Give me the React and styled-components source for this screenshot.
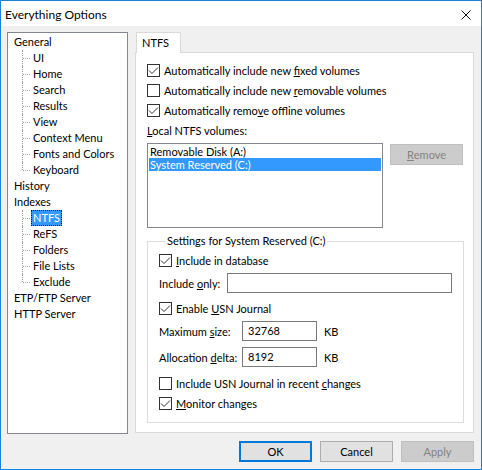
import React from 'react'
import styled, { createGlobalStyle } from 'styled-components'

const Global = createGlobalStyle`
  html, body { margin: 0; padding: 0; background: #ffffff; }
  * { box-sizing: border-box; }
`

const FONT = `"Segoe UI", Lato, "Liberation Sans", sans-serif`

const treeItems = [
  { label: 'General', level: 0 },
  { label: 'UI', level: 1 },
  { label: 'Home', level: 1 },
  { label: 'Search', level: 1 },
  { label: 'Results', level: 1 },
  { label: 'View', level: 1 },
  { label: 'Context Menu', level: 1 },
  { label: 'Fonts and Colors', level: 1 },
  { label: 'Keyboard', level: 1, last: true },
  { label: 'History', level: 0 },
  { label: 'Indexes', level: 0 },
  { label: 'NTFS', level: 1, selected: true },
  { label: 'ReFS', level: 1 },
  { label: 'Folders', level: 1 },
  { label: 'File Lists', level: 1 },
  { label: 'Exclude', level: 1, last: true },
  { label: 'ETP/FTP Server', level: 0 },
  { label: 'HTTP Server', level: 0 },
]

const Check = ({ checked }) => (
  <Box>
    {checked && (
      <svg width="11" height="11" viewBox="0 0 11 11">
        <polyline points="1,5.5 4,8.5 10,2.5" fill="none" stroke="#333" strokeWidth="1" />
      </svg>
    )}
  </Box>
)

export default function App() {
  return (
    <>
      <Global />
      <Window>
        <TitleBar>
          <Title>Everything Options</Title>
          <CloseIcon width="10" height="10" viewBox="0 0 10 10">
            <path d="M0.5 0.5 L9.5 9.5 M9.5 0.5 L0.5 9.5" stroke="#111" strokeWidth="1" />
          </CloseIcon>
        </TitleBar>
        <Body>
          <Main>
            <Tree>
              {treeItems.map((t) => (
                <TreeRow key={t.label} $level={t.level} $last={t.last}>
                  <TreeLabel $selected={t.selected}>{t.label}</TreeLabel>
                </TreeRow>
              ))}
            </Tree>
            <TabArea>
              <TabStrip>
                <Tab>NTFS</Tab>
              </TabStrip>
              <Panel>
                <CheckRow>
                  <Check checked />
                  <span>Automatically include new <u>f</u>ixed volumes</span>
                </CheckRow>
                <CheckRow>
                  <Check />
                  <span>Automatically include new <u>r</u>emovable volumes</span>
                </CheckRow>
                <CheckRow>
                  <Check checked />
                  <span>Automatically remo<u>v</u>e offline volumes</span>
                </CheckRow>
                <Label $mt={3}><u>L</u>ocal NTFS volumes:</Label>
                <VolumeRow>
                  <ListBox>
                    <ListItem>Removable Disk (A:)</ListItem>
                    <ListItem $selected>System Reserved (C:)</ListItem>
                  </ListBox>
                  <Button $disabled $side><u>R</u>emove</Button>
                </VolumeRow>
                <Group>
                  <Legend>Settings for System Reserved (C:)</Legend>
                  <CheckRow $mt={1}>
                    <Check checked />
                    <span><u>I</u>nclude in database</span>
                  </CheckRow>
                  <FieldRow $mt={3}>
                    <FieldLabel $w={68}>Include <u>o</u>nly:</FieldLabel>
                    <Input $w={225} />
                  </FieldRow>
                  <CheckRow $mt={5}>
                    <Check checked />
                    <span>Enable <u>U</u>SN Journal</span>
                  </CheckRow>
                  <FieldRow $mt={3}>
                    <FieldLabel $w={83}>Maximum <u>s</u>ize:</FieldLabel>
                    <Input $w={75}>32768</Input>
                    <Unit>KB</Unit>
                  </FieldRow>
                  <FieldRow $mt={6}>
                    <FieldLabel $w={83}>Allocation <u>d</u>elta:</FieldLabel>
                    <Input $w={75}>8192</Input>
                    <Unit>KB</Unit>
                  </FieldRow>
                  <CheckRow $mt={6}>
                    <Check />
                    <span>Include USN Journal in recent <u>c</u>hanges</span>
                  </CheckRow>
                  <CheckRow>
                    <Check checked />
                    <span><u>M</u>onitor changes</span>
                  </CheckRow>
                </Group>
              </Panel>
            </TabArea>
          </Main>
          <Footer>
            <Button $default>OK</Button>
            <Button>Cancel</Button>
            <Button $disabled>Apply</Button>
          </Footer>
        </Body>
      </Window>
    </>
  )
}

const Window = styled.div`
  width: 482px;
  height: 470px;
  border: 1px solid #1883d7;
  display: flex;
  flex-direction: column;
  font-family: ${FONT};
  font-size: 11px;
  color: #000;
  overflow: hidden;
`

const TitleBar = styled.div`
  height: 25px;
  background: #ffffff;
  display: flex;
  align-items: center;
  justify-content: space-between;
  padding: 0 10px 0 4px;
`

const Title = styled.div`
  font-size: 12px;
  margin-top: 1px;
`

const CloseIcon = styled.svg`
  display: block;
  margin-top: 2px;
`

const Body = styled.div`
  flex: 1;
  background: #f0f0f0;
  padding: 6px 7px 7px 6px;
  display: flex;
  flex-direction: column;
`

const Main = styled.div`
  display: flex;
  align-items: flex-start;
  gap: 7px;
`

const Tree = styled.div`
  width: 122px;
  height: 402px;
  background: #ffffff;
  border: 1px solid #828790;
  padding-top: 1px;
`

const TreeRow = styled.div`
  position: relative;
  height: 16px;
  display: flex;
  align-items: center;
  padding-left: ${(p) => (p.$level ? 23 : 4)}px;

  ${(p) =>
    p.$level
      ? `
    &::before {
      content: '';
      position: absolute;
      left: 14px;
      top: 0;
      height: ${p.$last ? 8 : 16}px;
      border-left: 1px dotted #a0a0a0;
    }
    &::after {
      content: '';
      position: absolute;
      left: 15px;
      top: 8px;
      width: 7px;
      border-top: 1px dotted #a0a0a0;
    }
  `
      : ''}
`

const TreeLabel = styled.span`
  line-height: 14px;
  padding: 0 1px;
  border: 1px dotted ${(p) => (p.$selected ? '#1a1a1a' : 'transparent')};
  background: ${(p) => (p.$selected ? '#3399ff' : 'transparent')};
  color: ${(p) => (p.$selected ? '#ffffff' : '#000')};
  white-space: nowrap;
`

const TabArea = styled.div`
  display: flex;
  flex-direction: column;
`

const TabStrip = styled.div`
  height: 20px;
  display: flex;
  padding-left: 1px;
`

const Tab = styled.div`
  width: 45px;
  height: 21px;
  background: #ffffff;
  border: 1px solid #d9d9d9;
  border-bottom: none;
  padding: 3px 0 0 5px;
  position: relative;
  z-index: 1;
`

const Panel = styled.div`
  width: 339px;
  height: 381px;
  background: #ffffff;
  border: 1px solid #d9d9d9;
  padding: 7px 0 0 11px;
`

const CheckRow = styled.div`
  height: 20px;
  display: flex;
  align-items: center;
  gap: 4px;
  margin-top: ${(p) => p.$mt || 0}px;
  white-space: nowrap;
`

const Box = styled.div`
  width: 13px;
  height: 13px;
  border: 1px solid #333333;
  background: #ffffff;
  display: flex;
  align-items: center;
  justify-content: center;
  flex-shrink: 0;
`

const Label = styled.div`
  height: 16px;
  line-height: 16px;
  margin-top: ${(p) => p.$mt || 0}px;
`

const VolumeRow = styled.div`
  display: flex;
  align-items: flex-start;
  gap: 7px;
  margin-top: 4px;
`

const ListBox = styled.div`
  width: 236px;
  height: 85px;
  border: 1px solid #828790;
  padding: 1px 1px 0;
`

const ListItem = styled.div`
  height: 13px;
  line-height: 13px;
  padding-left: 1px;
  background: ${(p) => (p.$selected ? '#3399ff' : 'transparent')};
  color: ${(p) => (p.$selected ? '#ffffff' : '#000')};
`

const Button = styled.div`
  width: 73px;
  height: 21px;
  display: flex;
  align-items: center;
  justify-content: center;
  margin-top: ${(p) => (p.$side ? 1 : 0)}px;
  background: ${(p) => (p.$disabled ? '#cccccc' : '#e1e1e1')};
  border: ${(p) =>
    p.$default ? '2px solid #0078d7' : p.$disabled ? '1px solid #bfbfbf' : '1px solid #adadad'};
  color: ${(p) => (p.$disabled ? '#838383' : '#000')};
`

const Group = styled.fieldset`
  width: 317px;
  height: 190px;
  margin: 5px 0 0;
  padding: 0 0 0 11px;
  border: 1px solid #dcdcdc;
`

const Legend = styled.legend`
  margin-left: 6px;
  padding: 0 2px;
  line-height: 16px;
`

const FieldRow = styled.div`
  height: 20px;
  display: flex;
  align-items: center;
  margin-top: ${(p) => p.$mt || 0}px;
`

const FieldLabel = styled.div`
  width: ${(p) => p.$w}px;
  white-space: nowrap;
`

const Input = styled.div`
  width: ${(p) => p.$w}px;
  height: 20px;
  border: 1px solid #7a7a7a;
  background: #ffffff;
  padding-left: 5px;
  line-height: 18px;
`

const Unit = styled.div`
  margin-left: 7px;
`

const Footer = styled.div`
  display: flex;
  justify-content: flex-end;
  gap: 8px;
  margin-top: auto;
`
